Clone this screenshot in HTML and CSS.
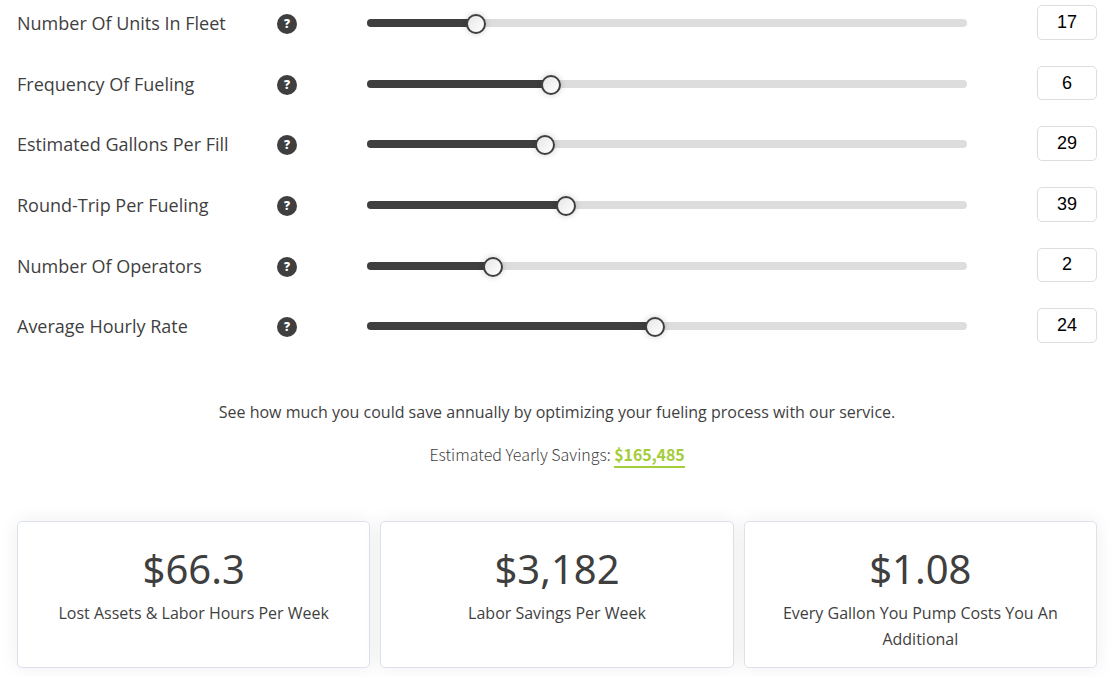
FILE: index.html
```html
<!DOCTYPE html>
<html lang="en">
<head>
<meta charset="utf-8">
<title>Fuel Savings Calculator</title>
<link rel="stylesheet" href="styles.css">
</head>
<body>
<main class="calculator">
  <section class="fields">
    <div class="field"><span class="label">Number Of Units In Fleet</span><span class="help">?</span><div class="track"><div class="fill" style="width:109px"><span class="thumb"></span></div></div><input class="value" type="text" value="17"></div>
    <div class="field"><span class="label">Frequency Of Fueling</span><span class="help">?</span><div class="track"><div class="fill" style="width:184px"><span class="thumb"></span></div></div><input class="value" type="text" value="6"></div>
    <div class="field"><span class="label">Estimated Gallons Per Fill</span><span class="help">?</span><div class="track"><div class="fill" style="width:178px"><span class="thumb"></span></div></div><input class="value" type="text" value="29"></div>
    <div class="field"><span class="label">Round-Trip Per Fueling</span><span class="help">?</span><div class="track"><div class="fill" style="width:199px"><span class="thumb"></span></div></div><input class="value" type="text" value="39"></div>
    <div class="field"><span class="label">Number Of Operators</span><span class="help">?</span><div class="track"><div class="fill" style="width:126px"><span class="thumb"></span></div></div><input class="value" type="text" value="2"></div>
    <div class="field"><span class="label">Average Hourly Rate</span><span class="help">?</span><div class="track"><div class="fill" style="width:288px"><span class="thumb"></span></div></div><input class="value" type="text" value="24"></div>
  </section>
  <p class="intro">See how much you could save annually by optimizing your fueling process with our service.</p>
  <p class="yearly">Estimated Yearly Savings: <strong class="amount">$165,485</strong></p>
  <section class="cards">
    <div class="card"><div class="figure">$66.3</div><div class="caption">Lost Assets &amp; Labor Hours Per Week</div></div>
    <div class="card"><div class="figure">$3,182</div><div class="caption">Labor Savings Per Week</div></div>
    <div class="card"><div class="figure">$1.08</div><div class="caption">Every Gallon You Pump Costs You An Additional</div></div>
  </section>
</main>
</body>
</html>
```
FILE: styles.css
```css
* { box-sizing: border-box; }
html { overflow: hidden; }
body { margin: 0; background: #fff; color: #3f3f3f; font-family: "Open Sans", sans-serif; }
.calculator { width: 1108px; height: 676px; padding: 5.2px 11px 0 17px; overflow: hidden; }
.fields { display: flex; flex-direction: column; gap: 26px; }
.field { display: grid; grid-template-columns: 260px 20px 670px 130px; height: 34.6px; align-items: center; }
.label { margin-top: 1.4px; font-size: 18px; line-height: 26px; white-space: nowrap; }
.help { width: 20px; height: 20px; margin-top: 3.4px; border-radius: 50%; background: #3f3f3f; color: #fff; font-size: 12px; font-weight: 800; line-height: 20px; text-align: center; }
.track { height: 8px; margin: 1.4px 0 0 70px; border-radius: 4px; background: #ddd; }
.fill { position: relative; height: 8px; border-radius: 4px 0 0 4px; background: #3f3f3f; }
.thumb { position: absolute; right: -10px; top: -5px; width: 20px; height: 20px; border: 2px solid #3f3f3f; border-radius: 50%; background: linear-gradient(135deg, #e6e6e6, #fff); box-shadow: 0 0 6px rgba(0, 0, 0, .2); }
.value { justify-self: end; width: 60px; height: 34.6px; padding: .24px 0 0; border: 1px solid #ddd; border-radius: 5px; background: #fff; color: #000; font: 18px/24px "Liberation Sans", Arial, sans-serif; text-align: center; }
.intro { margin: 56px 0 0; font-size: 16px; line-height: 26px; text-align: center; }
.yearly { margin: 16px 0 0; font: 300 16px/26px "Noto Sans CJK JP", sans-serif; text-align: center; }
.amount { display: inline-block; color: #a3cd39; font-weight: 700; letter-spacing: -.12px; line-height: 24px; border-bottom: 2px solid #a3cd39; }
.cards { display: grid; grid-template-columns: repeat(3, 1fr); gap: 10px; margin-top: 53px; }
.card { height: 147px; padding: 21px 20px 0; border: 1px solid #dde1ec; border-radius: 5px; background: #fff; box-shadow: 0 0 20px rgba(0, 0, 0, .07); text-align: center; }
.figure { font: 40px/52px "Noto Sans", sans-serif; }
.caption { margin-top: 5px; font-size: 16px; line-height: 26px; }
```
